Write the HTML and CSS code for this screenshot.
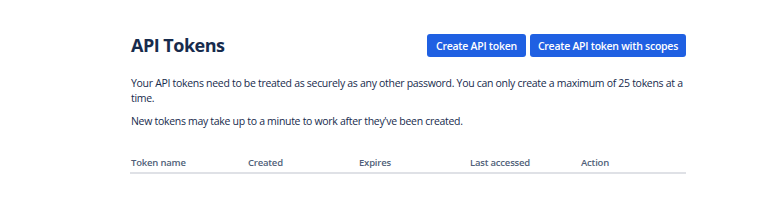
FILE: index.html
```html
<!DOCTYPE html>
<html lang="en">
<head>
    <meta charset="UTF-8">
    <title>API Tokens</title>
    <link rel="stylesheet" href="styles.css">
</head>
<body>
    <div class="page">
        <div class="page-header">
            <h1>API Tokens</h1>
            <div class="actions">
                <button class="btn">Create API token</button>
                <button class="btn btn-wide">Create API token with scopes</button>
            </div>
        </div>

        <p class="intro">Your API tokens need to be treated as securely as any other password. You can only create a maximum of 25 tokens at a time.</p>
        <p class="intro">New tokens may take up to a minute to work after they've been created.</p>

        <table class="tokens">
            <thead>
                <tr>
                    <th class="col-name">Token name</th>
                    <th class="col">Created</th>
                    <th class="col">Expires</th>
                    <th class="col">Last accessed</th>
                    <th>Action</th>
                </tr>
            </thead>
        </table>
    </div>
</body>
</html>
```

FILE: styles.css
```css
body {
    margin: 0;
    background: #fff;
    font-family: 'Open Sans', 'Noto Sans', sans-serif;
    color: #172b4d;
}

.page {
    width: 556px;
    margin-left: 130px;
    padding-top: 34px;
}

.page-header {
    display: flex;
    justify-content: space-between;
    align-items: center;
    margin-bottom: 19px;
}

h1 {
    margin: 0 0 0 1px;
    font-size: 18px;
    line-height: 23px;
    font-weight: 700;
    letter-spacing: -0.5px;
    color: #172b4d;
}

.actions {
    display: flex;
    gap: 4px;
}

.btn {
    height: 23px;
    padding: 0 9px;
    border: none;
    border-radius: 3px;
    background: #1f60e2;
    color: #fff;
    font-family: inherit;
    font-size: 10.5px;
    font-weight: 600;
    letter-spacing: -0.25px;
}

.btn-wide {
    padding: 0 8px;
}

.intro {
    margin: 0 0 8px 1px;
    font-size: 10.5px;
    line-height: 15px;
    letter-spacing: -0.3px;
    color: #172b4d;
}

.tokens {
    width: 100%;
    margin-top: 28px;
    border-collapse: collapse;
    table-layout: fixed;
}

.tokens th {
    padding: 0 0 3px 1px;
    text-align: left;
    font-size: 9.5px;
    line-height: 12px;
    font-weight: 600;
    letter-spacing: -0.2px;
    color: #505f79;
    border-bottom: 2px solid #dfe1e6;
}

.tokens th.col-name {
    width: 116px;
}

.tokens th.col {
    width: 110px;
}
```
